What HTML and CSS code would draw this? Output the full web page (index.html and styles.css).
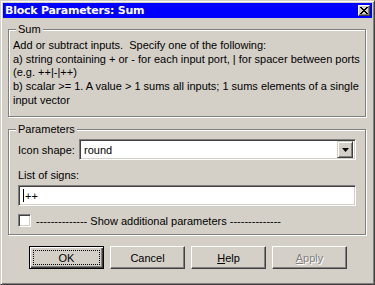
FILE: index.html
```html
<!DOCTYPE html>
<html>
<head>
<meta charset="utf-8">
<link rel="stylesheet" href="styles.css">
</head>
<body>
<div class="window">
  <div class="titlebar">
    <span class="title">Block Parameters: Sum</span>
    <span class="close"><svg width="8" height="7" viewBox="0 0 8 7"><path d="M0 0h2v1h1v1h2v-1h1v-1h2v1h-1v1h-1v1h-1v1h1v1h1v1h1v1h-2v-1h-1v-1h-2v1h-1v1h-2v-1h1v-1h1v-1h1v-1h-1v-1h-1v-1h-1z" fill="#000"/></svg></span>
  </div>
  <div class="content">
    <div class="group sum">
      <div class="legend">Sum</div>
      <div class="desc">Add or subtract inputs.&nbsp; Specify one of the following:<br>a) string containing + or - for each input port, | for spacer between ports<br>(e.g. ++|-|++)<br>b) scalar &gt;= 1. A value &gt; 1 sums all inputs; 1 sums elements of a single<br>input vector</div>
    </div>
    <div class="group params">
      <div class="legend">Parameters</div>
      <div class="row">
        <span class="label">Icon shape:</span>
        <div class="combo"><span class="value">round</span><span class="arrow"><svg width="7" height="4" viewBox="0 0 7 4"><path d="M0 0h7l-3.5 4z" fill="#000"/></svg></span></div>
      </div>
      <div class="label signs">List of signs:</div>
      <div class="edit"><span class="caret"></span>++</div>
      <div class="check-row"><span class="checkbox"></span><span class="label">-------------- Show additional parameters --------------</span></div>
    </div>
    <div class="buttons">
      <div class="btn default"><span class="focus">OK</span></div>
      <div class="btn">Cancel</div>
      <div class="btn"><span><u>H</u>elp</span></div>
      <div class="btn disabled"><span><u>A</u>pply</span></div>
    </div>
  </div>
</div>
</body>
</html>
```

FILE: styles.css
```css
html, body { margin: 0; padding: 0; background: #d4d0c8; }
body { font-family: "Liberation Sans", Arial, sans-serif; font-size: 11px; color: #000; }
.window {
  width: 375px; height: 285px; box-sizing: border-box;
  border-top: 1px solid #d4d0c8; border-left: 1px solid #d4d0c8;
  border-right: 1px solid #404040; border-bottom: 1px solid #404040;
  box-shadow: inset 1px 1px 0 #fff, inset -1px -1px 0 #808080;
  padding: 2px;
  display: flex; flex-direction: column;
}
.titlebar {
  height: 15px; background: #0000ff; display: flex; align-items: center; justify-content: space-between;
  padding: 0 2px 0 2px;
}
.title { color: #fff; font-family: "DejaVu Sans", Tahoma, sans-serif; font-weight: bold; font-size: 11px; letter-spacing: -0.25px; }
.close {
  width: 12px; height: 11px; box-sizing: border-box; background: #d4d0c8;
  border-top: 1px solid #fff; border-left: 1px solid #fff; border-right: 1px solid #404040; border-bottom: 1px solid #404040;
  box-shadow: inset -1px -1px 0 #808080;
  display: flex; align-items: center; justify-content: center;
}
.close svg { display: block; }
.content { padding: 11px 5px 0 5px; display: flex; flex-direction: column; }
.group {
  position: relative; border: 1px solid #808080; box-shadow: inset 1px 1px 0 #fff, 1px 1px 0 #fff;
  margin-right: 1px;
}
.legend { position: absolute; top: -7px; left: 7px; padding: 0 2px; background: #d4d0c8; line-height: 13px; }
.sum { height: 86px; }
.desc { padding: 9px 4px 0 4px; line-height: 13.7px; white-space: nowrap; }
.params { margin-top: 12px; height: 106px; padding: 9px 9px 0 9px; box-sizing: border-box; }
.row { display: flex; align-items: center; margin-top: 0; }
.row .label { width: 61px; }
.combo {
  flex: 1; height: 21px; box-sizing: border-box; background: #fff;
  border-top: 1px solid #808080; border-left: 1px solid #808080; border-right: 1px solid #fff; border-bottom: 1px solid #fff;
  box-shadow: inset 1px 1px 0 #404040, inset -1px -1px 0 #d4d0c8;
  display: flex; align-items: center; padding: 2px;
}
.combo .value { flex: 1; padding-left: 2px; }
.arrow {
  width: 16px; height: 17px; box-sizing: border-box; background: #d4d0c8;
  border-top: 1px solid #d4d0c8; border-left: 1px solid #d4d0c8; border-right: 1px solid #404040; border-bottom: 1px solid #404040;
  box-shadow: inset 1px 1px 0 #fff, inset -1px -1px 0 #808080;
  display: flex; align-items: center; justify-content: center;
}
.arrow svg { display: block; }
.signs { margin-top: 9px; }
.edit {
  margin-top: 4px; height: 21px; box-sizing: border-box; background: #fff;
  border-top: 1px solid #808080; border-left: 1px solid #808080; border-right: 1px solid #fff; border-bottom: 1px solid #fff;
  box-shadow: inset 1px 1px 0 #404040, inset -1px -1px 0 #d4d0c8;
  display: flex; align-items: center; padding-left: 4px;
}
.caret { width: 1px; height: 13px; background: #000; margin-right: 1px; }
.check-row { display: flex; align-items: center; margin-top: 8px; gap: 5px; }
.checkbox {
  width: 13px; height: 13px; box-sizing: border-box; background: #fff;
  border-top: 1px solid #808080; border-left: 1px solid #808080; border-right: 1px solid #fff; border-bottom: 1px solid #fff;
  box-shadow: inset 1px 1px 0 #404040, inset -1px -1px 0 #d4d0c8;
}
.buttons { display: flex; gap: 6px; margin-top: 11px; padding-left: 21px; }
.btn {
  width: 75px; height: 23px; box-sizing: border-box; background: #d4d0c8;
  border-top: 1px solid #fff; border-left: 1px solid #fff; border-right: 1px solid #404040; border-bottom: 1px solid #404040;
  box-shadow: inset -1px -1px 0 #808080;
  display: flex; align-items: center; justify-content: center;
}
.btn.default {
  border: 1px solid #000;
  box-shadow: inset 1px 1px 0 #fff, inset -1px -1px 0 #404040, inset -2px -2px 0 #808080;
}
.focus {
  width: 67px; height: 15px; box-sizing: border-box; border: 1px dotted #000; display: flex; align-items: center; justify-content: center;
}
.btn.disabled { color: #808080; text-shadow: 1px 1px 0 #fff; }
```
